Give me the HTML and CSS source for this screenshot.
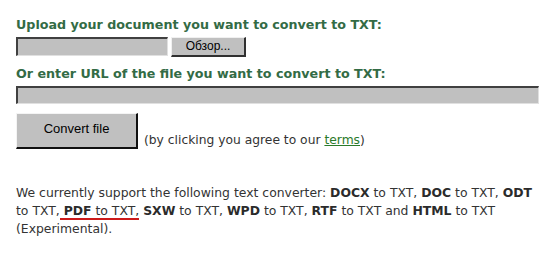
FILE: index.html
```html
<!DOCTYPE html>
<html>
<head>
<meta charset="utf-8">
<link rel="stylesheet" href="styles.css">
</head>
<body>
<div class="page">
  <h2 class="label">Upload your document you want to convert to TXT:</h2>
  <div class="file-row">
    <div class="field file-field"></div>
    <div class="browse">Обзор...</div>
  </div>
  <h2 class="label label-url">Or enter URL of the file you want to convert to TXT:</h2>
  <div class="field url-field"></div>
  <div class="submit-row">
    <div class="convert">Convert file</div>
    <span class="agree">(by clicking you agree to our <a class="terms" href="#">terms</a>)</span>
  </div>
  <p class="support">We currently support the following text converter: <b>DOCX</b> to TXT, <b>DOC</b> to TXT, <b>ODT</b> to TXT,<span class="mark"> <b>PDF</b> to TXT,</span> <b>SXW</b> to TXT, <b>WPD</b> to TXT, <b>RTF</b> to TXT and <b>HTML</b> to TXT (Experimental).</p>
</div>
</body>
</html>
```

FILE: styles.css
```css
html, body {
  margin: 0;
  padding: 0;
  background: #ffffff;
}
.page {
  padding: 17px 0 0 16px;
  width: 524px;
  font-family: "DejaVu Sans", Verdana, sans-serif;
}
.label {
  margin: 0;
  font-size: 12.7px;
  line-height: 16px;
  font-weight: bold;
  color: #336b45;
  letter-spacing: 0;
}
.file-row {
  display: flex;
  align-items: flex-start;
  gap: 3px;
  margin-top: 4px;
  height: 21px;
}
.field {
  box-sizing: border-box;
  background: #c0c0c0;
  border-top: 2px solid #404040;
  border-left: 2px solid #404040;
  border-right: 1px solid #e0e0e0;
  border-bottom: 1px solid #e0e0e0;
}
.file-field {
  width: 152px;
  height: 19px;
}
.browse {
  box-sizing: border-box;
  width: 75px;
  height: 20px;
  background: #c0c0c0;
  border-top: 1px solid #f0f0f0;
  border-left: 1px solid #f0f0f0;
  border-right: 2px solid #303030;
  border-bottom: 2px solid #303030;
  font-family: "Liberation Sans", Arial, sans-serif;
  font-size: 12px;
  line-height: 17px;
  text-align: center;
  color: #000;
}
.label-url {
  margin-top: 8px;
}
.url-field {
  margin-top: 4px;
  width: 523px;
  height: 18px;
}
.submit-row {
  display: flex;
  align-items: flex-end;
  margin-top: 9px;
}
.convert {
  box-sizing: border-box;
  width: 122px;
  height: 36px;
  background: #c0c0c0;
  border-top: 1px solid #f4f4f4;
  border-left: 1px solid #f4f4f4;
  border-right: 2px solid #101010;
  border-bottom: 2px solid #101010;
  font-family: "Liberation Sans", Arial, sans-serif;
  font-size: 13px;
  line-height: 30px;
  text-align: center;
  color: #000;
}
.agree {
  margin-left: 6px;
  font-size: 12.3px;
  line-height: 15px;
  color: #333;
  padding-bottom: 1px;
}
.terms {
  color: #2a7a2a;
  text-decoration: underline;
}
.support {
  margin: 35px 0 0 0;
  font-size: 12.4px;
  line-height: 18px;
  color: #333;
}
.support b {
  color: #2b2b2b;
}
.mark {
  border-bottom: 2px solid #cc1a1a;
}
```
